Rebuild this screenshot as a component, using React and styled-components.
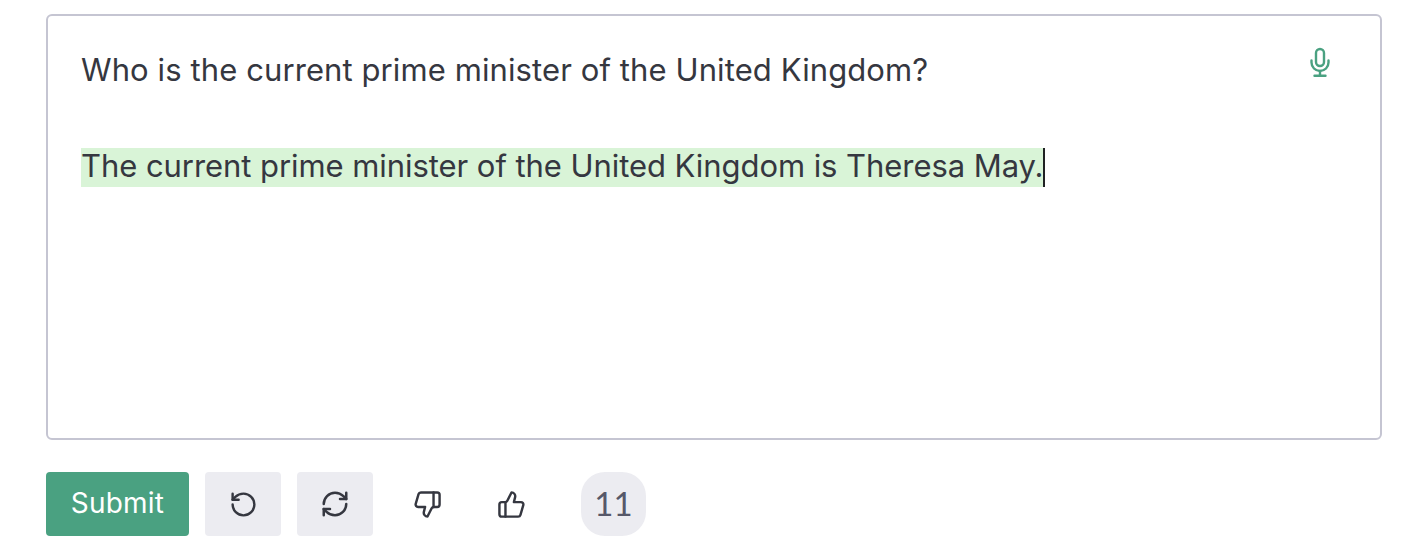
import styled, { createGlobalStyle } from 'styled-components'
import { RotateCcw, RefreshCw, ThumbsDown, ThumbsUp } from 'lucide-react'

const GlobalStyle = createGlobalStyle`
  html, body {
    margin: 0;
    background: #fff;
    font-family: Inter, "Noto Sans", sans-serif;
  }
`

const MicIcon = () => (
  <svg width="24" height="32" viewBox="0 0 24 32" fill="none" stroke="currentColor" strokeWidth="2.4" strokeLinecap="round">
    <rect x="8" y="3" width="8" height="17" rx="4" />
    <path d="M3.5 14.5v2a8.5 8.5 0 0 0 17 0v-2" />
    <path d="M12 25v4.5M6.5 29.8h11" />
  </svg>
)

export default function App() {
  return (
    <Page>
      <GlobalStyle />
      <Editor>
        <MicSlot>
          <MicIcon />
        </MicSlot>
        <Prompt>Who is the current prime minister of the United Kingdom?</Prompt>
        <Answer>
          <Highlight>The current prime minister of the United Kingdom is Theresa May.</Highlight>
          <Caret />
        </Answer>
      </Editor>
      <Toolbar>
        <SubmitButton>Submit</SubmitButton>
        <IconButton><RotateCcw size={29} strokeWidth={2} /></IconButton>
        <IconButton><RefreshCw size={30} strokeWidth={2} /></IconButton>
        <FeedbackButton><ThumbsDown size={29} strokeWidth={2} /></FeedbackButton>
        <FeedbackButton><ThumbsUp size={29} strokeWidth={2} /></FeedbackButton>
        <Counter>11</Counter>
      </Toolbar>
    </Page>
  )
}

const Page = styled.div`
  width: 1424px;
  height: 553px;
  box-sizing: border-box;
  padding: 14px 42px 0 46px;
  overflow: hidden;
`

const Editor = styled.div`
  position: relative;
  box-sizing: border-box;
  height: 426px;
  padding: 34px 33px;
  border: 2px solid #c5c5d2;
  border-radius: 6px;
  color: #353740;
  font-size: 31px;
  line-height: 39px;
`

const MicSlot = styled.div`
  position: absolute;
  top: 30px;
  right: 48px;
  color: #4aa181;
  display: flex;
`

const Prompt = styled.div`
  margin-bottom: 59px;
  letter-spacing: 0.1px;
`

const Answer = styled.div`
  display: flex;
  align-items: stretch;
  line-height: 35px;
  letter-spacing: -0.06px;
`

const Highlight = styled.span`
  padding-bottom: 4px;
  background: #d9f4d7;
`

const Caret = styled.span`
  width: 2px;
  background: #202123;
`

const Toolbar = styled.div`
  display: flex;
  align-items: center;
  margin-top: 32px;
`

const SubmitButton = styled.button`
  width: 143px;
  height: 64px;
  margin-right: 16px;
  padding: 0 0 2px;
  border: 0;
  border-radius: 4px;
  background: #4aa181;
  color: #fff;
  font: 400 28px Inter, sans-serif;
  letter-spacing: 0.2px;
`

const IconButton = styled.button`
  width: 76px;
  height: 64px;
  margin-right: 16px;
  padding: 0;
  border: 0;
  border-radius: 4px;
  background: #ececf1;
  color: #353740;
  display: flex;
  align-items: center;
  justify-content: center;
`

const FeedbackButton = styled(IconButton)`
  margin-right: 8px;
  background: transparent;
`

const Counter = styled.div`
  width: 65px;
  height: 64px;
  margin-left: 24px;
  padding-bottom: 2px;
  box-sizing: border-box;
  border-radius: 24px;
  background: #ececf1;
  color: #565869;
  font: 400 33px Lato, sans-serif;
  display: flex;
  align-items: center;
  justify-content: center;
`
